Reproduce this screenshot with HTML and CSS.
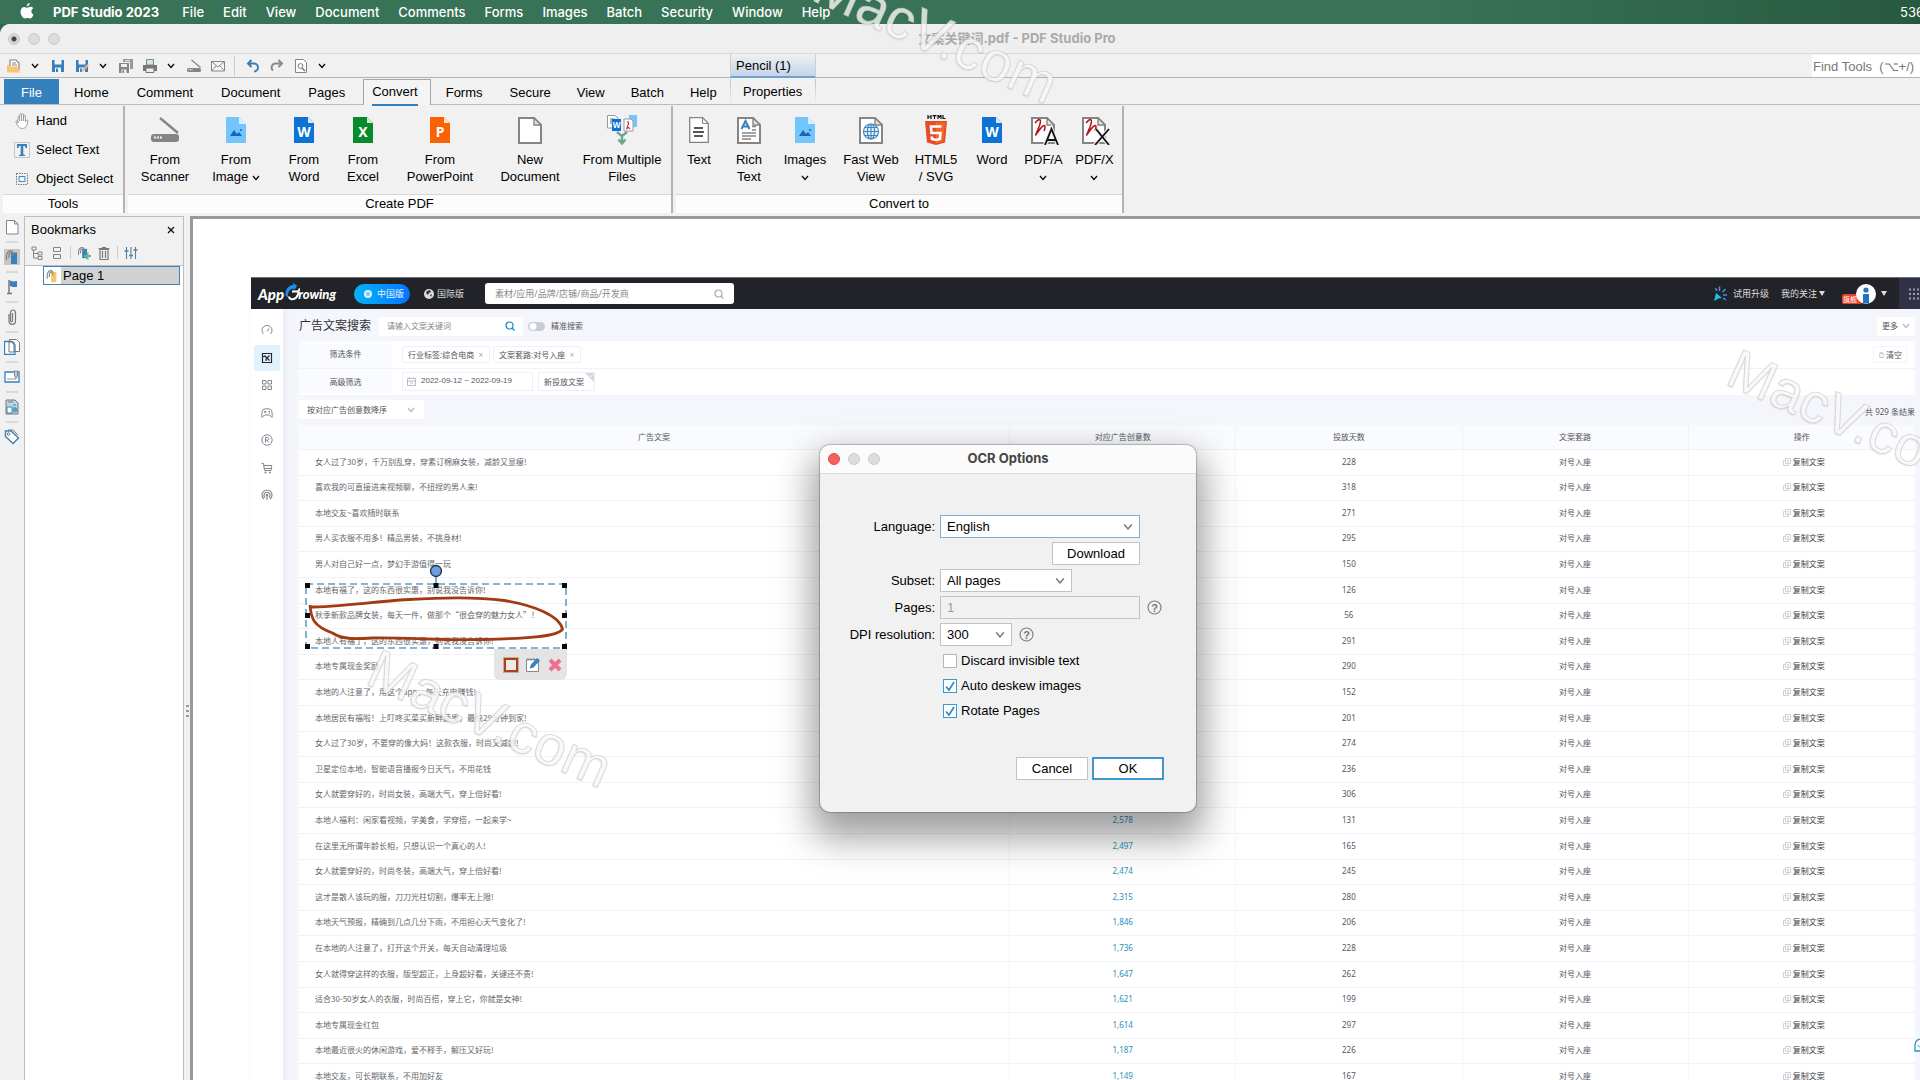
FILE: index.html
```html
<!DOCTYPE html>
<html lang="zh-CN">
<head>
<meta charset="utf-8">
<title>文案关键词.pdf - PDF Studio Pro</title>
<link rel="stylesheet" href="styles.css">
</head>
<body>
<svg class="defs" aria-hidden="true">
  <symbol id="chev" viewBox="0 0 8 6"><path d="M1 1l3 3.500 3-3.500" fill="none" stroke="currentColor" stroke-width="1.200"/></symbol>
  <symbol id="floppy" viewBox="0 0 14 14"><path d="M1 1h12v12H1z" fill="#3b7fb8"/><path d="M3.500 1h7v4.500h-7z" fill="#eef2f6"/><path d="M4 8.500h6V13H4z" fill="#eef2f6"/><path d="M5 9.500h2V13H5z" fill="#3b7fb8"/></symbol>
  <symbol id="scanner" viewBox="0 0 28 26"><path d="M9 1l18 15" stroke="#858585" stroke-width="2.400"/><path d="M3 17h22a3 3 0 0 1 3 3v2a3 3 0 0 1-3 3H3a3 3 0 0 1-3-3v-2a3 3 0 0 1 3-3z" fill="#858585"/><path d="M3 19.500h2v2H3zM6 19.500h2v2H6zM9 19.500h2v2H9z" fill="#f1f1f1"/></symbol>
  <symbol id="picture" viewBox="0 0 20 26"><path d="M0 0h13l7 7v19H0z" fill="#74c5fb"/><path d="M13 0l7 7h-7z" fill="#d9effe"/><path d="M4 19l4-6 3 4 2-2 3 4z" fill="#1467b3"/><circle cx="15" cy="13" r="1" fill="#1467b3"/></symbol>
  <symbol id="word" viewBox="0 0 20 26"><path d="M0 0h14l6 6v20H0z" fill="#0b73d6"/><path d="M14 0l6 6h-6z" fill="#d6e8fa"/><text x="10" y="20" class="glyph">W</text></symbol>
  <symbol id="page" viewBox="0 0 24 27"><path d="M1 1h15l7 7v18H1z" fill="#fff" stroke="#858585" stroke-width="2"/><path d="M16 1v7h7z" fill="#e4e4e4" stroke="#858585" stroke-width="1.400"/></symbol>
  <symbol id="copy" viewBox="0 0 8 8"><path d="M2.500.5h5v5h-5zM5.500 5.500v2h-5v-5h2M4 2.500h2M4 4h2" fill="none" stroke="#c4c5cf" stroke-width=".8"/></symbol>
  <symbol id="lens" viewBox="0 0 10 10"><circle cx="4.500" cy="4.500" r="3.500" fill="none" stroke="currentColor" stroke-width="1.200"/><path d="M7 7l2.500 2.500" stroke="currentColor" stroke-width="1.200"/></symbol>
  <symbol id="help" viewBox="0 0 15 15"><circle cx="7.500" cy="7.500" r="6.500" fill="none" stroke="#808080" stroke-width="1.200"/><text x="7.500" y="11.500" class="qmark">?</text></symbol>
  <symbol id="marker" viewBox="0 0 14 16"><path d="M6 3.500h6v11.500H6z" fill="currentColor"/><path d="M1.500 11V7c0-3 2-5.500 5-5 2 .300 1.500 3 1.500 5M4 9V6.500c0-2 1-3 2.500-3" fill="none" stroke="#858585" stroke-width="1.300"/></symbol>
</svg>

<nav class="menubar">
  <svg class="apple" viewBox="0 0 14 16"><path d="M9.700 0c.1 1.700-1.300 3.300-2.900 3.300C6.600 1.700 8.100.2 9.700 0zM13.500 11.500C12.800 13.400 11.500 15.600 10 15.600c-1 0-1.400-.6-2.600-.6s-1.700.6-2.600.6C3 15.600.500 11.900.5 8.600c0-3 1.900-4.700 3.800-4.700 1.200 0 2.100.8 2.900.8.800 0 1.900-.9 3.400-.9 1.100 0 2 .5 2.600 1.400-2.600 1.500-2.200 5.200.3 6.300z" fill="#fff"/></svg>
  <a href="#" class="app">PDF Studio 2023</a><a href="#">File</a><a href="#">Edit</a><a href="#">View</a><a href="#">Document</a><a href="#">Comments</a><a href="#">Forms</a><a href="#">Images</a><a href="#">Batch</a><a href="#">Security</a><a href="#">Window</a><a href="#">Help</a>
  <span class="status">536</span>
</nav>

<main class="window">
  <header class="titlebar">
    <div class="lights"><i class="dot"></i><i></i><i></i></div>
    <h1>文案关键词.pdf - PDF Studio Pro</h1>
  </header>

  <div class="quick">
    <button class="qi" aria-label="Open"><svg viewBox="0 0 14 14"><path d="M3 8V1h6l3 3v7" fill="#fff" stroke="#858585" stroke-width="1.200"/><path d="M5 4h4M5 6h5" stroke="#858585"/><path d="M0 6h2.500l1 1.500H11l2 6H0z" fill="#fbc66f"/></svg></button>
    <button class="qc" aria-label="More"><svg><use href="#chev"/></svg></button>
    <button class="qi" aria-label="Save"><svg><use href="#floppy"/></svg></button>
    <button class="qi" aria-label="Save as"><svg viewBox="0 0 14 14"><use href="#floppy"/><path d="M6 12l6.500-7 1.500 1.500L7.500 13z" fill="#f2b283"/></svg></button>
    <button class="qc" aria-label="More"><svg><use href="#chev"/></svg></button>
    <button class="qi" aria-label="Save all"><svg viewBox="0 0 14 14"><path d="M4 0h10v10h-3V3H4z" fill="#999"/><path d="M0 4h10v10H0z" fill="#858585"/><path d="M2 5h6v3H2zM2.500 10.500h5V14h-5zM6 1.200h5v1H6z" fill="#efefef"/><path d="M3.500 11h1.500v3H3.500z" fill="#858585"/></svg></button>
    <button class="qi" aria-label="Print"><svg viewBox="0 0 14 14"><path d="M3.500.5h7V6h-7z" fill="#cfe6ee" stroke="#858585"/><path d="M0 6h14v6H0z" fill="#777"/><path d="M3 9h8v4.500H3z" fill="#eee" stroke="#777"/></svg></button>
    <button class="qc" aria-label="More"><svg><use href="#chev"/></svg></button>
    <button class="qi" aria-label="Scan"><svg><use href="#scanner"/></svg></button>
    <button class="qi" aria-label="Email"><svg viewBox="0 0 14 14"><path d="M.5 2.500h13v9.500H.5zM.5 2.500L7 8l6.500-5.500M.5 12l4.500-5M13.500 12L9 7" fill="#f8f8f8" stroke="#858585"/></svg></button>
    <i class="vsep"></i>
    <button class="qi" aria-label="Undo"><svg viewBox="0 0 14 14"><path d="M5.500 1L2 4.500 5.500 8M2.500 4.500H8a4 4 0 0 1 0 8" fill="none" stroke="#3480bd" stroke-width="2"/></svg></button>
    <button class="qi" aria-label="Redo"><svg viewBox="0 0 14 14"><path d="M8.500 1L12 4.500 8.500 8M11.500 4.500H6a4 4 0 0 0-3 7" fill="none" stroke="#8b8b8b" stroke-width="2"/></svg></button>
    <button class="qi" aria-label="Preview"><svg viewBox="0 0 14 14"><path d="M1.500.5h8l3 3v10h-11z" fill="#fff" stroke="#858585"/><circle cx="6.500" cy="7" r="2.400" fill="none" stroke="#777"/><path d="M8 9l3 3" stroke="#777" stroke-width="1.500"/></svg></button>
    <button class="qc" aria-label="More"><svg><use href="#chev"/></svg></button>
    <span class="context">Pencil (1)</span>
    <input class="find" type="text" placeholder="Find Tools&nbsp; (⌥+/)" aria-label="Find Tools">
  </div>

  <nav class="tabs">
    <button class="file">File</button><button>Home</button><button>Comment</button><button>Document</button><button>Pages</button><button class="on"><span>Convert</span></button><button>Forms</button><button class="slim">Secure</button><button class="slim">View</button><button class="slim">Batch</button><button class="slim">Help</button><button class="props">Properties</button>
  </nav>

  <div class="ribbon">
    <section class="group tools">
      <div class="list">
        <button><svg viewBox="0 0 16 16"><path d="M4 10V4.500c0-1.200 1.700-1.200 1.700 0V2c0-1.300 1.900-1.300 1.900 0v-.5c0-1.200 1.900-1.200 1.900 0V3c0-1.200 1.800-1.200 1.800 0v6c1-2.500 3-2 2.500-.500C13 13 11.500 15.500 8.500 15.500S3.500 13 2 9c-.5-1.500 1-2 2 1zM5.700 4.500V8M7.600 2v6M9.500 2v6" fill="#fff" stroke="#999"/></svg>Hand</button>
        <button><svg viewBox="0 0 16 16"><path d="M.5.5h15v15H.5z" fill="none" stroke="#999" stroke-dasharray="1 1"/><path d="M3 2h10v4h-1.500l-.5-2H9.300v8.500l1.700.5v1H5v-1l1.700-.5V4H5l-.5 2H3z" fill="#3a80ba"/></svg>Select Text</button>
        <button><svg viewBox="0 0 16 16"><path d="M2.500 2.500h11v11h-11z" fill="none" stroke="#777" stroke-dasharray="1.500 1"/><path d="M5 5.500h6v5H5z" fill="#eef5fb" stroke="#4585bb"/></svg>Object Select</button>
      </div>
      <h2>Tools</h2>
    </section>
    <section class="group create">
      <div class="items">
        <button><svg class="i28"><use href="#scanner"/></svg><span>From<br>Scanner</span></button>
        <button><svg class="i20"><use href="#picture"/></svg><span>From<br>Image <svg class="ch"><use href="#chev"/></svg></span></button>
        <button><svg class="i20"><use href="#word"/></svg><span>From<br>Word</span></button>
        <button><svg class="i20" viewBox="0 0 20 26"><path d="M0 0h14l6 6v20H0z" fill="#078a2c"/><path d="M14 0l6 6h-6z" fill="#d5ecda"/><text x="10" y="20" class="glyph">X</text></svg><span>From<br>Excel</span></button>
        <button><svg class="i20" viewBox="0 0 20 26"><path d="M0 0h14l6 6v20H0z" fill="#fb6205"/><path d="M14 0l6 6h-6z" fill="#fde0ce"/><text x="10" y="20" class="glyph">P</text></svg><span>From<br>PowerPoint</span></button>
        <button><svg class="i24"><use href="#page"/></svg><span>New<br>Document</span></button>
        <button><svg class="i30" viewBox="0 0 30 30"><path d="M.5.5H8L11 3v10H.500z" fill="#fff" stroke="#999"/><path d="M3 4h5M3 6h5M3 8h3" stroke="#666"/><path d="M22 0h8v12h-8z" fill="#74c5fb"/><path d="M5 4h9v12H5z" fill="#0b73d6"/><text x="9.500" y="13" class="tinyglyph">W</text><path d="M17 4h7l2 2v10h-9z" fill="#fff" stroke="#999"/><path d="M20 7c3-1 1 3 0 6s1-3 3 1" fill="none" stroke="#c33" stroke-width="1.200"/><path d="M10 17l5 4v7M20 17l-5 4M11.500 24.500L15 28.500l3.500-4" fill="none" stroke="#6ba48f" stroke-width="2.400"/></svg><span>From Multiple<br>Files</span></button>
      </div>
      <h2>Create PDF</h2>
    </section>
    <section class="group convert">
      <div class="items">
        <button><svg class="i20" viewBox="0 0 20 26"><path d="M.7.7h13l5.600 5.600v19H.700z" fill="#fff" stroke="#858585" stroke-width="1.300"/><path d="M13.500 1v5.500h5.500" fill="none" stroke="#858585"/><path d="M5 11h9M4 15h11M5 19h9" stroke="#222" stroke-width="1.500"/></svg><span>Text</span></button>
        <button><svg class="i24" viewBox="0 0 24 27"><use href="#page"/><path d="M4.500 12L8.500 4l4 8M6 9.500h5" fill="none" stroke="#3a80ba" stroke-width="2"/><path d="M15 9.500h4M15 13h4M5 16h14M5 19h14M5 22h9" stroke="#858585" stroke-width="1.600"/></svg><span>Rich<br>Text</span></button>
        <button><svg class="i20"><use href="#picture"/></svg><span>Images<br><svg class="ch"><use href="#chev"/></svg></span></button>
        <button><svg class="i24" viewBox="0 0 24 27"><use href="#page"/><g fill="#e8f2fa" stroke="#3f86bd" stroke-width="1.200"><circle cx="12" cy="14.500" r="7.500"/><ellipse cx="12" cy="14.500" rx="3.600" ry="7.500"/><path d="M12 7v15M4.500 14.500h15M6 10.500h12M6 18.500h12"/></g></svg><span>Fast Web<br>View</span></button>
        <button><svg class="i30" viewBox="0 0 30 30"><path d="M7 0v4M10 0v4M7 2h3M11.500.6h4M13.500 0v4M17 4V0l1.500 2L20 0v4M22 0v3.500h2.500" fill="none" stroke="#111" stroke-width="1.200"/><path d="M4 6h22l-2 21.500-9 2.500-9-2.500z" fill="#e44d26"/><path d="M15 7.500h9l-1.700 19L15 28.500z" fill="#f1662a"/><path d="M20.500 11.500H10l.5 6.500h9l-.6 6-3.900 1-4-1-.2-2.500" fill="none" stroke="#fff" stroke-width="2.600"/></svg><span>HTML5<br>/ SVG</span></button>
        <button><svg class="i20"><use href="#word"/></svg><span>Word</span></button>
        <button><svg class="i30" viewBox="0 0 30 30"><use href="#page" x="2" y="2" width="24" height="27"/><path d="M6 8c5-6 7-4 4 4l-3 7c-2 4 4-6 7-8s2 3 1 5" fill="none" stroke="#b8161c" stroke-width="1.600"/><path d="M16 30L22.500 14 29 30M18 25h9" fill="none" stroke="#f1f1f1" stroke-width="4"/><path d="M16 30L22.500 14 29 30M18 25h9" fill="none" stroke="#111" stroke-width="1.800"/></svg><span>PDF/A<br><svg class="ch"><use href="#chev"/></svg></span></button>
        <button><svg class="i30" viewBox="0 0 30 30"><use href="#page" x="2" y="2" width="24" height="27"/><path d="M6 8c5-6 7-4 4 4l-3 7c-2 4 4-6 7-8s2 3 1 5" fill="none" stroke="#b8161c" stroke-width="1.600"/><path d="M16 14l13 16M29 14L15 30" fill="none" stroke="#f1f1f1" stroke-width="4"/><path d="M16 14l13 16M29 14L15 30" fill="none" stroke="#111" stroke-width="1.800"/></svg><span>PDF/X<br><svg class="ch"><use href="#chev"/></svg></span></button>
      </div>
      <h2>Convert to</h2>
    </section>
  </div>

  <div class="work">
    <aside class="rail">
      <button aria-label="Pages"><svg viewBox="0 0 16 16"><path d="M2.500 1.500h8l3.500 3.500v10H2.500zM10.500 1.500V5H14" fill="#fff" stroke="#858585"/></svg></button>
      <button aria-label="Bookmarks" class="sel"><svg class="blue"><use href="#marker"/></svg></button>
      <button aria-label="Destinations"><svg viewBox="0 0 16 16"><path d="M5 1v13M3 14.500h5" stroke="#777" stroke-width="1.500"/><path d="M6 1.500l3 1 4-.5v6H9L6 7z" fill="#3a80ba"/></svg></button>
      <button aria-label="Attachments"><svg viewBox="0 0 16 16"><path d="M8.500 4v7.500c0 1.500-2 1.500-2 0V4c0-4 5-4 5 0v8c0 4.500-6.500 4.500-6.500 0V5" fill="none" stroke="#777" stroke-width="1.200"/></svg></button>
      <button aria-label="Layers"><svg viewBox="0 0 16 16"><path d="M5.500.5h7l3 3v9h-10z" fill="#fff" stroke="#777"/><path d="M.5 2.500h7L11 6v9.500H.5z" fill="#fff" stroke="#3a80ba" stroke-width="1.300"/><path d="M5 6V3h5v10H5z" fill="none" stroke="#777"/></svg></button>
      <button aria-label="Signatures"><svg viewBox="0 0 16 16"><path d="M1 3h14v10H1z" fill="#fff" stroke="#3a80ba" stroke-width="1.300"/><path d="M3 10h9" stroke="#999"/><path d="M10.500 2v5l1.500 2.500L13.500 7V2z" fill="#ccc" stroke="#888"/></svg></button>
      <button aria-label="Fields"><svg viewBox="0 0 16 16"><path d="M2 1h9l3 3v11H2z" fill="#bcd8e3" stroke="#777"/><path d="M3 8h5v6H3z" fill="#fff" stroke="#3a80ba"/><path d="M4 3h5M9 6h3M9 9h3" stroke="#777"/><circle cx="11" cy="11" r="2.500" fill="#4ba3c4"/></svg></button>
      <button aria-label="Tags"><svg viewBox="0 0 16 16"><path d="M1.500 2H7l7.500 7L9 14.500 1.500 7.500z" fill="#fff" stroke="#3a80ba" stroke-width="1.400"/><path d="M4 1h5l5 5" fill="none" stroke="#777"/><circle cx="4.500" cy="5" r="1.300" fill="none" stroke="#777"/></svg></button>
    </aside>
    <aside class="panel">
      <header><h2>Bookmarks</h2><button aria-label="Close"><svg viewBox="0 0 8 8"><path d="M1 1l6 6M7 1L1 7" stroke="#111" stroke-width="1.300"/></svg></button></header>
      <div class="ptools">
        <svg viewBox="0 0 14 14"><path d="M2 1h4v3H2zM8 6h4v3H8zM8 10.500h4v3H8zM3.500 4v8H8M3.500 7.500H8" fill="none" stroke="#858585"/></svg>
        <svg viewBox="0 0 14 14"><path d="M3.500 1.500h7v4h-7zM3.500 8.500h7v4h-7z" fill="none" stroke="#858585"/></svg>
        <i></i>
        <svg class="blue" viewBox="0 0 14 14"><use href="#marker" width="12" height="13"/><path d="M10.500 6.500v7M7 10h7" stroke="#6fb487" stroke-width="2"/></svg>
        <svg viewBox="0 0 14 14"><path d="M3 3.500h8v10H3zM1.500 2.500h11M5 1.500h4M5.500 5v7M8.500 5v7" fill="none" stroke="#777" stroke-width="1.200"/></svg>
        <i></i>
        <svg viewBox="0 0 14 14"><path d="M2.500 1v12M7 1v12M11.500 1v12" stroke="#4585ad" stroke-width="1.100"/><path d="M.5 5h4M5 9.500h4M9.500 4h4" stroke="#777" stroke-width="1.600"/></svg>
      </div>
      <ul class="tree"><li><svg class="amber"><use href="#marker"/></svg><span>Page 1</span></li></ul>
    </aside>
    <div class="gutter"><i></i></div>

    <div class="viewer">
      <article class="page">
        <header class="topnav">
          <span class="logo"><b class="big">App</b><svg viewBox="0 0 16 20"><path d="M9.500 3C4 3 1 8 1.500 14l2.500 1.500C3.500 10 6 6.500 9.500 6.500V9l3.500-5L9 .500z" fill="#1b8fef"/><path d="M8 9.500h6.500c0 5-3.500 8.500-7.500 7.500-1.500-.5-2-1.500-2-2.500M14 9.500c1-1 1.500-2 2-3" fill="none" stroke="#fff" stroke-width="2"/></svg><b>rowing</b></span>
          <a href="#" class="pill"><i></i>中国版</a>
          <a href="#" class="intl"><svg viewBox="0 0 10 10"><circle cx="5" cy="5" r="5" fill="#ddd"/><path d="M3 2l3-1 1 2-2 1-1 2-2-2zM6 6l2-1-1 3z" fill="#33343c"/></svg>国际版</a>
          <label class="gsearch"><input type="text" placeholder="素材/应用/品牌/店铺/商品/开发商" aria-label="搜索"><svg><use href="#lens"/></svg></label>
          <div class="user">
            <svg class="spark" viewBox="0 0 14 16"><path d="M1 15l2-8 6 5-3.500.5z" fill="#18c3f0"/><path d="M6.500 5V.5M9.500 6l3-3M10 9h4M10 12l3 2M4 5L2.500 2" stroke="#3f8ff0" stroke-width="1.500"/></svg>
            <a href="#">试用升级</a><a href="#" class="fav">我的关注<i class="tri"></i></a>
            <span class="avatar"><b>旗舰</b><svg viewBox="0 0 20 20"><circle cx="10" cy="10" r="10" fill="#fff"/><circle cx="10" cy="6" r="2.600" fill="#2377b8"/><path d="M7 10h6v9.500H7z" fill="#2377b8"/></svg></span><i class="tri"></i>
          </div>
          <button class="apps" aria-label="应用"><svg viewBox="0 0 12 12"><path d="M0 1.500h12M0 6h12M0 10.500h12" stroke="#9c9cab" stroke-width="2" stroke-dasharray="2 2"/></svg></button>
        </header>
        <div class="body">
          <nav class="side">
            <a href="#" aria-label="概览"><svg viewBox="0 0 12 12"><path d="M2.500 10A5 5 0 1 1 9.500 10M6 7.500L8 4.500" fill="none" stroke="#858692"/></svg></a>
            <a href="#" class="cur" aria-label="素材"><svg viewBox="0 0 12 12"><path d="M1.500 1.500h9v9h-9zM3.500 3.500l5 5M8.500 3.500L5 7v2M1.500 4.500h3" fill="none" stroke="#23242e" stroke-width="1.200"/></svg></a>
            <a href="#" aria-label="应用"><svg viewBox="0 0 12 12"><path d="M1.500 1.500h3.500V5H1.500zM7 1.500h3.500V5H7zM1.500 7h3.500v3.500H1.500zM7 7h3.500v3.500H7z" fill="none" stroke="#858692"/></svg></a>
            <a href="#" aria-label="游戏"><svg viewBox="0 0 12 12"><path d="M2 2.500c2-1 6-1 8 0 1 1 1.500 5 1 8L8.500 8h-5L1 10.500C.5 7.500 1 3.500 2 2.500zM3 5h2.500M4.200 4v2M7.500 4.500h1.500M7.500 6H9" fill="none" stroke="#858692"/></svg></a>
            <a href="#" aria-label="品牌"><svg viewBox="0 0 12 12"><circle cx="6" cy="6" r="5.200" fill="none" stroke="#858692"/><path d="M4.500 8.500v-5h2c2 0 2 2.500 0 2.500h-2M6 6l1.500 2.500" fill="none" stroke="#858692"/></svg></a>
            <a href="#" aria-label="商品"><svg viewBox="0 0 12 12"><path d="M.5 1.500h2l1 7h6.500l.8-5H3M3.500 6.500H10" fill="none" stroke="#858692"/><circle cx="4.500" cy="10.500" r="1" fill="#858692"/><circle cx="9" cy="10.500" r="1" fill="#858692"/></svg></a>
            <a href="#" aria-label="直播"><svg viewBox="0 0 12 12"><path d="M3 10a5 5 0 1 1 6 0M4 8.500a3 3 0 1 1 4 0M6 6v5" fill="none" stroke="#858692" stroke-width="1.200"/><circle cx="6" cy="6" r="1.300" fill="#858692"/></svg></a>
          </nav>
          <div class="content">
            <div class="head">
              <h2>广告文案搜索</h2>
              <label class="kw"><input type="text" placeholder="请输入文案关键词" aria-label="文案关键词"><svg><use href="#lens"/></svg></label>
              <label class="switch"><input type="checkbox">精准搜索</label>
              <button class="more">更多<svg><use href="#chev"/></svg></button>
            </div>
            <div class="filters">
              <div class="frow"><span class="fname">筛选条件</span><span class="tag">行业标签:综合电商<i>×</i></span><span class="tag">文案套路:对号入座<i>×</i></span><button class="clear"><svg viewBox="0 0 6 8"><path d="M.5 2h5M1 2v5h4V2M2 1h2" fill="none" stroke="#aaa" stroke-width=".8"/></svg>清空</button></div>
              <div class="frow"><span class="fname">高级筛选</span><button class="date"><svg viewBox="0 0 9 9"><path d="M.5 1.500h8v7h-8zM.5 4h8M2.500 0v2M6.500 0v2M3 6h3" fill="none" stroke="#b9bcc8"/></svg>2022-09-12 ~ 2022-09-19</button><button class="fresh">新投放文案<svg viewBox="0 0 9 9"><path d="M0 0h9v9z" fill="#d3d5e1"/><path d="M4 2.500L5.500 4 8 1.500" fill="none" stroke="#fff"/></svg></button></div>
            </div>
            <div class="sortline"><button class="sort">按对应广告创意数降序<svg><use href="#chev"/></svg></button><span>共 929 条结果</span></div>
            <table>
              <thead><tr><th class="c1">广告文案</th><th>对应广告创意数</th><th>投放天数</th><th>文案套路</th><th>操作</th></tr></thead>
              <tbody>
<tr><td>女人过了30岁，千万别乱穿，穿素订棉麻女装，减龄又显瘦!</td><td></td><td>228</td><td>对号入座</td><td><button><svg><use href="#copy"/></svg>复制文案</button></td></tr>
<tr><td>喜欢我的可直接进来视频聊，不扭捏的男人来!</td><td></td><td>318</td><td>对号入座</td><td><button><svg><use href="#copy"/></svg>复制文案</button></td></tr>
<tr><td>本地交友~喜欢随时联系</td><td></td><td>271</td><td>对号入座</td><td><button><svg><use href="#copy"/></svg>复制文案</button></td></tr>
<tr><td>男人买衣服不用多！精品男装，不挑身材!</td><td></td><td>295</td><td>对号入座</td><td><button><svg><use href="#copy"/></svg>复制文案</button></td></tr>
<tr><td>男人对自己好一点，梦幻手游值得一玩</td><td></td><td>150</td><td>对号入座</td><td><button><svg><use href="#copy"/></svg>复制文案</button></td></tr>
<tr><td>本地有福了，这的东西很实惠，别说我没告诉你!</td><td></td><td>126</td><td>对号入座</td><td><button><svg><use href="#copy"/></svg>复制文案</button></td></tr>
<tr><td>秋季新款品牌女装，每天一件，做那个“很会穿的魅力女人”！</td><td></td><td>56</td><td>对号入座</td><td><button><svg><use href="#copy"/></svg>复制文案</button></td></tr>
<tr><td>本地人有福了，这的东西很实惠，别说我没告诉你!</td><td></td><td>291</td><td>对号入座</td><td><button><svg><use href="#copy"/></svg>复制文案</button></td></tr>
<tr><td>本地专属现金奖励</td><td></td><td>290</td><td>对号入座</td><td><button><svg><use href="#copy"/></svg>复制文案</button></td></tr>
<tr><td>本地的人注意了，用这个app，每天充电赚钱!</td><td></td><td>152</td><td>对号入座</td><td><button><svg><use href="#copy"/></svg>复制文案</button></td></tr>
<tr><td>本地居民有福啦！上叮咚买菜买新鲜蔬果，最快29分钟到家!</td><td></td><td>201</td><td>对号入座</td><td><button><svg><use href="#copy"/></svg>复制文案</button></td></tr>
<tr><td>女人过了30岁，不要穿的像大妈！这款衣服，时尚又减龄!</td><td></td><td>274</td><td>对号入座</td><td><button><svg><use href="#copy"/></svg>复制文案</button></td></tr>
<tr><td>卫星定位本地，智能语音播报今日天气，不用花钱</td><td></td><td>236</td><td>对号入座</td><td><button><svg><use href="#copy"/></svg>复制文案</button></td></tr>
<tr><td>女人就要穿好的，时尚女装，高端大气，穿上倍好看!</td><td></td><td>306</td><td>对号入座</td><td><button><svg><use href="#copy"/></svg>复制文案</button></td></tr>
<tr><td>本地人福利：闲家看视频，学美食，学穿搭，一起来学~</td><td>2,578</td><td>131</td><td>对号入座</td><td><button><svg><use href="#copy"/></svg>复制文案</button></td></tr>
<tr><td>在这里无所谓年龄长相，只想认识一个真心的人!</td><td>2,497</td><td>165</td><td>对号入座</td><td><button><svg><use href="#copy"/></svg>复制文案</button></td></tr>
<tr><td>女人就要穿好的，时尚冬装，高端大气，穿上倍好看!</td><td>2,474</td><td>245</td><td>对号入座</td><td><button><svg><use href="#copy"/></svg>复制文案</button></td></tr>
<tr><td>这才是散人该玩的服，刀刀光柱切割，爆率无上限!</td><td>2,315</td><td>280</td><td>对号入座</td><td><button><svg><use href="#copy"/></svg>复制文案</button></td></tr>
<tr><td>本地天气预报，精确到几点几分下雨，不用担心天气变化了!</td><td>1,846</td><td>206</td><td>对号入座</td><td><button><svg><use href="#copy"/></svg>复制文案</button></td></tr>
<tr><td>在本地的人注意了，打开这个开关，每天自动清理垃圾</td><td>1,736</td><td>228</td><td>对号入座</td><td><button><svg><use href="#copy"/></svg>复制文案</button></td></tr>
<tr><td>女人就得穿这样的衣服，版型超正，上身超好看，关键还不贵!</td><td>1,647</td><td>262</td><td>对号入座</td><td><button><svg><use href="#copy"/></svg>复制文案</button></td></tr>
<tr><td>适合30-50岁女人的衣服，时尚百搭，穿上它，你就是女神!</td><td>1,621</td><td>199</td><td>对号入座</td><td><button><svg><use href="#copy"/></svg>复制文案</button></td></tr>
<tr><td>本地专属现金红包</td><td>1,614</td><td>297</td><td>对号入座</td><td><button><svg><use href="#copy"/></svg>复制文案</button></td></tr>
<tr><td>本地最近很火的休闲游戏，爱不释手，解压又好玩!</td><td>1,187</td><td>226</td><td>对号入座</td><td><button><svg><use href="#copy"/></svg>复制文案</button></td></tr>
<tr><td>本地交友，可长期联系，不用加好友</td><td>1,149</td><td>167</td><td>对号入座</td><td><button><svg><use href="#copy"/></svg>复制文案</button></td></tr>
              </tbody>
            </table>
          </div>
        </div>
        <svg class="chat" viewBox="0 0 14 14"><path d="M1 13V7a6 6 0 1 1 6 6z" fill="#fff" stroke="#2b8fc7" stroke-width="1.300"/><path d="M4 7c1 3 5 3 6 0" fill="none" stroke="#2b8fc7"/></svg>
      </article>

      <div class="annot">
        <svg class="scribble" viewBox="0 0 262 85">
          <path d="M131 10v14" stroke="#4f94c6" stroke-width="1.500"/>
          <path d="M1 20h260v64H1z" fill="none" stroke="#5f9fca" stroke-width="1.600" stroke-dasharray="7 4"/>
          <path d="M4 43c30 0 60-5 100-7.500s70-2.500 95 1c30 5 55 15 58.500 28.500-4 8-40 9.500-78 10.500-40 1-75-2-112-1.500-15 1-30 2-40-5C8 62 6 54 5 41" fill="none" stroke="#a23b12" stroke-width="2.800"/>
          <path d="M0 19h5v5H0zM128.500 19h5v5h-5zM257 19h5v5h-5zM0 49h5v5H0zM257 49h5v5h-5zM0 80h5v5H0zM128.500 80h5v5h-5zM257 80h5v5h-5z" fill="#0b0b0b"/>
          <circle cx="131" cy="7" r="5.500" fill="#6c9edb" stroke="#1c2f4a" stroke-width="1.300"/>
        </svg>
        <div class="mini">
          <button aria-label="Colour"><i class="swatch"></i></button>
          <button aria-label="Edit"><svg viewBox="0 0 16 16"><path d="M1.500 2.500h12v12h-12z" fill="#fff" stroke="#888"/><path d="M3 1v3M6 1v3M9 1v3" stroke="#888"/><path d="M4.500 11.500L6 7.500l6-6.500 3 2.500-6.500 7z" fill="#3a80ba"/></svg></button>
          <button aria-label="Delete"><svg viewBox="0 0 16 16"><path d="M3 3l10 10M13 3L3 13" stroke="#ed6f8d" stroke-width="4"/></svg></button>
        </div>
      </div>
    </div>
  </div>
</main>

<form class="dialog" role="dialog" aria-labelledby="dlg">
  <header><div class="lights"><i class="red"></i><i></i><i></i></div><h2 id="dlg">OCR Options</h2></header>
  <div class="fields">
    <label for="lang">Language:</label>
    <span class="pick w200 focus"><select id="lang"><option>English</option></select><svg><use href="#chev"/></svg></span>
    <button type="button" class="dl">Download</button>
    <label for="subset">Subset:</label>
    <span class="pick w132"><select id="subset"><option>All pages</option></select><svg><use href="#chev"/></svg></span>
    <label for="pages">Pages:</label>
    <span class="row"><input id="pages" type="text" value="1" disabled><svg class="q"><use href="#help"/></svg></span>
    <label for="dpi">DPI resolution:</label>
    <span class="row"><span class="pick w72"><select id="dpi"><option>300</option></select><svg><use href="#chev"/></svg></span><svg class="q"><use href="#help"/></svg></span>
  </div>
  <div class="checks">
    <label><span class="box"><input type="checkbox"></span>Discard invisible text</label>
    <label><span class="box"><input type="checkbox" checked><svg viewBox="0 0 14 14"><path d="M3 7.500L6 11l5-8" fill="none" stroke="#2e8bc9" stroke-width="1.700"/></svg></span>Auto deskew images</label>
    <label><span class="box"><input type="checkbox" checked><svg viewBox="0 0 14 14"><path d="M3 7.500L6 11l5-8" fill="none" stroke="#2e8bc9" stroke-width="1.700"/></svg></span>Rotate Pages</label>
  </div>
  <footer><button type="button">Cancel</button><button type="button" class="ok">OK</button></footer>
</form>

<div class="marks" aria-hidden="true"><span class="m1">MacV.com</span><span class="m2">MacV.com</span><span class="m3">MacV.com</span></div>
</body>
</html>
```
FILE: styles.css
```css
* { box-sizing: border-box; }
html, body { height: 100%; }
body {
  margin: 0;
  display: flex;
  flex-direction: column;
  position: relative;
  overflow: hidden;
  background: #2f684b;
  color: #000;
  font: 13px/17px "Liberation Sans", "Noto Sans CJK SC", sans-serif;
}
button { border: 0; margin: 0; padding: 0; background: none; color: inherit; font: inherit; }
input, select { font: inherit; color: inherit; margin: 0; }
h1, h2, ul { margin: 0; padding: 0; font-size: 13px; font-weight: 400; }
a { color: inherit; text-decoration: none; }
svg { display: block; flex: none; }
i { display: block; flex: none; font-style: normal; }
.defs { display: none; }
.glyph { font: bold 14px "Noto Sans", sans-serif; fill: #fff; text-anchor: middle; }
.tinyglyph { font: bold 8px "Noto Sans", sans-serif; fill: #fff; text-anchor: middle; }
.qmark { font: bold 11px "Liberation Sans", sans-serif; fill: #777; text-anchor: middle; }
.blue { color: #3a80ba; }
.amber { color: #f7c46c; }

/* System menu bar */
.menubar {
  flex: none;
  display: flex;
  align-items: center;
  gap: 19px;
  height: 24px;
  padding-left: 20px;
  color: #fff;
  font: 500 13px/24px Inter, sans-serif;
  background: linear-gradient(90deg, #387357 0%, #387357 75%, #27593f 100%);
}
.apple { width: 14px; height: 16px; margin-bottom: 2px; }
.app { font-weight: 700; margin-right: 4px; }
.status { margin-left: auto; margin-right: -4px; font-weight: 400; }

/* Application window */
.window { flex: 1; min-height: 0; display: flex; flex-direction: column; background: #f1f1f1; border-top-left-radius: 10px; }
.titlebar { flex: none; display: grid; grid-template-columns: 1fr auto 1fr; align-items: center; height: 30px; padding-left: 8px; background: #efefef; border-bottom: 1px solid #d8d8d8; border-top-left-radius: 10px; }
.titlebar h1 { grid-column: 2; font: 700 13px/18px Inter, "Noto Sans CJK SC", sans-serif; color: #aaa; margin-left: 106px; padding-bottom: 1px; }
.lights { display: flex; gap: 8px; }
.lights i { width: 12px; height: 12px; border-radius: 50%; background: #dcdcdc; border: 1px solid #cbcbcb; }
.lights .dot { background: radial-gradient(circle, #444 0 2px, #d6d6d6 3px); }
.lights .red { background: #f4605a; border-color: #e3504b; }

.quick { flex: none; display: flex; align-items: center; height: 24px; padding-left: 7px; border-bottom: 1px solid #b3b3b3; }
.qi { width: 14px; margin-right: 10px; }
.qc { width: 8px; margin-right: 12px; }
.qi svg { width: 14px; height: 14px; }
.qc svg { width: 8px; height: 6px; }
.vsep { width: 1px; height: 20px; background: #ccc; margin: 0 11px 0 -1px; }
.context { align-self: stretch; width: 86px; margin: 0 0 -1px 392px; padding-left: 5px; line-height: 23px; background: linear-gradient(#f1f1f1, #c3d4e8); border: solid #c9d0d8; border-width: 0 1px; border-bottom: 2px solid #6fa2d2; }
.find { align-self: stretch; width: 108px; margin-left: auto; padding: 0 0 0 1px; border: 0; background: #fff; border-top: 1px solid #f1f1f1; }
.find::placeholder { color: #777; opacity: 1; }

.tabs { flex: none; display: flex; align-items: stretch; height: 27px; padding: 1px 0 0 4px; border-bottom: 1px solid #bbb; }
.tabs button { padding: 1px 14px 0; line-height: 25px; }
.tabs .file { width: 55px; margin-right: 1px; background: #3581bd; color: #fff; }
.tabs .on { padding: 0 12px 0 8px; margin: 0 1px -1px 4px; background: #f4f4f4; border: 1px solid #a5a5a5; border-bottom: 0; line-height: 24px; }
.tabs .on span { display: block; border-bottom: 2px solid #3581bd; }
.tabs .slim { padding: 1px 13px 0; }
.tabs .props { width: 86px; padding: 0; border: solid; border-width: 0 1px; border-image: linear-gradient(#b9bec4, #f1f1f1) 1; }

/* Ribbon */
.ribbon { flex: none; display: flex; align-items: stretch; padding: 1px 0 3px; }
.group { display: flex; flex-direction: column; border-right: 2px solid #b3b3b3; }
.group h2 { margin-left: 3px; height: 19px; line-height: 17px; text-align: center; background: #fcfcfc; border-top: 1px solid #d6d6d6; }
.list { display: flex; flex-direction: column; width: 123px; height: 88px; padding: 0 0 0 14px; }
.list button { display: flex; align-items: center; gap: 6px; height: 29px; }
.list svg { width: 16px; height: 16px; }
.items { display: grid; height: 88px; padding: 9px 0 0 8px; }
.create .items { grid-template-columns: 64px 78px 58px 60px 94px 86px 98px; }
.convert .items { padding-left: 3px; grid-template-columns: 46px 54px 58px 74px 56px 56px 47px 55px; }
.items button { display: grid; grid-template-rows: 30px 34px; row-gap: 6px; align-items: center; justify-items: center; align-content: start; }
.items span { align-self: start; white-space: nowrap; }
.ch { display: inline-block; width: 8px; height: 6px; }
.i20 { width: 20px; height: 26px; }
.i24 { width: 24px; height: 27px; }
.i28 { width: 28px; height: 26px; }
.i30 { width: 30px; height: 30px; }

/* Work area */
.work { flex: 1; min-height: 0; display: flex; }
.rail { flex: none; width: 24px; display: flex; flex-direction: column; align-items: center; padding-top: 3px; }
.rail button { position: relative; display: grid; place-items: center; width: 16px; height: 16px; margin-bottom: 14px; }
.rail button:not(:last-child)::after { content: ""; position: absolute; top: 22px; left: 2px; width: 12px; height: 2px; background: #d9d9d9; }
.rail .sel { background: #c6c6c6; }
.rail svg { width: 16px; height: 16px; }
.panel { flex: none; width: 160px; background: #fff; border: 1px solid #bdbdbd; border-bottom: 0; }
.panel header { display: flex; justify-content: space-between; align-items: center; height: 25px; padding: 0 8px 0 6px; background: #f1f1f1; }
.panel header svg { width: 8px; height: 8px; }
.ptools { display: flex; align-items: center; height: 24px; padding: 0 0 2px 5px; gap: 6px; background: #f1f1f1; border-bottom: 1px solid #bdbdbd; }
.ptools svg { width: 14px; height: 14px; }
.ptools i { width: 1px; height: 13px; background: #ccc; }
.tree { list-style: none; padding: 0 3px 0 18px; }
.tree li { display: flex; align-items: center; border: 1px solid #4380b5; }
.tree svg { width: 14px; height: 14px; margin: 0 2px 0 1px; }
.tree span { flex: 1; padding-left: 2px; background: #d1d1d1; }
.gutter { flex: none; width: 6px; display: grid; place-items: center; }
.gutter i { width: 3px; height: 12px; background: repeating-linear-gradient(#999 0 2px, transparent 2px 5px); margin-top: 126px; }
.viewer { flex: 1; min-width: 0; position: relative; overflow: hidden; background: #fff; border: 3px solid #999; border-width: 3px 0 0 3px; padding: 58px 0 0 58px; }

/* Web page inside the document */
.page { position: relative; font: 8px/12px "Noto Sans", "Noto Sans CJK SC", sans-serif; color: #55565e; background: #f5f6fb; }
.topnav { display: flex; align-items: center; height: 32px; padding-left: 7px; background: #222328; border-top: 1px solid #6f7078; color: #ddd; font-size: 9px; }
.logo { display: flex; align-items: center; width: 78px; margin-right: 18px; color: #fff; font: italic 700 13px/20px Lato, sans-serif; }
.logo b { margin-left: -2px; }
.logo .big { margin: 0; font-size: 15px; }
.logo svg { width: 16px; height: 20px; margin-top: -4px; }
.pill { display: flex; align-items: center; gap: 5px; width: 56px; height: 20px; padding-left: 10px; border-radius: 10px; background: linear-gradient(90deg, #03b5f7, #0773ff); color: #e8f4ff; white-space: nowrap; }
.pill i { width: 8px; height: 8px; border: 2px solid #dff2ff; border-radius: 50%; background: #7cc9f8; }
.intl { display: flex; align-items: center; gap: 3px; margin: 0 21px 0 14px; white-space: nowrap; }
.intl svg { width: 10px; height: 10px; }
.gsearch { display: flex; align-items: center; width: 249px; height: 21px; padding: 0 10px; background: #fff; border-radius: 3px; color: #aaa; }
.gsearch input, .kw input { flex: 1; min-width: 0; padding: 0; border: 0; background: none; }
.gsearch input::placeholder, .kw input::placeholder { color: #888; opacity: 1; }
.gsearch svg, .kw svg { width: 10px; height: 10px; }
.user { display: flex; align-items: center; margin-left: auto; margin-right: 12px; white-space: nowrap; }
.spark { width: 14px; height: 16px; margin-right: 6px; }
.fav { display: flex; align-items: center; gap: 2px; margin: 0 17px 0 12px; }
.tri { border: 3px solid transparent; border-top: 5px solid #ddd; border-bottom: 0; }
.avatar { display: flex; margin-right: 5px; }
.avatar b { align-self: flex-end; width: 20px; height: 10px; margin-right: -6px; padding-left: 1px; border-radius: 2px; background: #e8401f; color: #fff; font: 7px/10px "Noto Sans CJK SC", sans-serif; }
.avatar svg { width: 20px; height: 20px; }
.apps { align-self: stretch; width: 21px; padding-left: 10px; background: #303046; overflow: hidden; }
.apps svg { width: 12px; height: 12px; }
.body { display: flex; }
.side { flex: none; width: 32px; display: flex; flex-direction: column; align-items: center; padding-top: 8px; background: #fff; box-shadow: 2px 0 6px rgba(60, 70, 110, .08); }
.side a { display: grid; place-items: center; width: 26px; height: 26px; margin-bottom: 1px; border-radius: 2px; }
.side a:nth-child(2n+1) { margin-bottom: 2px; }
.side .cur { background: #e1f2fc; }
.side svg { width: 12px; height: 12px; }
.content { flex: 1; min-width: 0; padding: 8px 5px 0 16px; }
.head { display: flex; align-items: center; height: 18px; margin-bottom: 6px; }
.head h2 { font-size: 12px; line-height: 18px; color: #2e3038; margin-right: 8px; }
.kw { display: flex; align-items: center; width: 144px; height: 19px; padding: 0 8px; background: #fff; color: #1687d3; }
.kw input { color: #555; }
.switch { display: flex; align-items: center; gap: 6px; margin-left: 5px; }
.switch input { appearance: none; width: 17px; height: 9px; border-radius: 5px; background: radial-gradient(circle at 5px 50%, #fff 0 3px, #c9cbd8 4px); }
.more { display: flex; align-items: center; justify-content: space-between; width: 38px; height: 19px; margin-left: auto; padding: 0 5px; background: #fff; }
.more svg, .sort svg { width: 8px; height: 6px; color: #b5b7c2; }
.filters { background: #fff; }
.frow { display: flex; align-items: center; height: 27px; padding-right: 8px; }
.frow + .frow { border-top: 1px solid #f1f2f7; padding-bottom: 2px; }
.fname { align-self: stretch; width: 93px; margin-right: 10px; line-height: 26px; text-align: center; background: #fafbff; }
.tag { display: flex; align-items: center; justify-content: space-between; width: 88px; height: 17px; padding: 0 6px 0 5px; margin-right: 3px; border: 1px solid #eef0f6; border-radius: 2px; white-space: nowrap; }
.tag i { color: #aaa; }
.clear { display: flex; align-items: center; gap: 2px; width: 34px; height: 17px; margin-left: auto; padding-left: 5px; border: 1px solid #f4f5f9; }
.clear svg { width: 5px; height: 8px; }
.date { display: flex; align-items: center; gap: 5px; width: 131px; height: 19px; padding-left: 4px; border: 1px solid #eef0f6; font-family: "Liberation Sans", sans-serif; }
.date svg { width: 9px; height: 9px; }
.fresh { display: flex; justify-content: space-between; width: 57px; height: 19px; margin-left: 5px; padding-left: 5px; border: 1px solid #eef0f6; line-height: 17px; }
.fresh svg { width: 9px; height: 9px; }
.sortline { display: flex; justify-content: space-between; align-items: center; height: 19px; margin: 5px 0 6px; }
.sortline span { padding-top: 4px; }
.sort { display: flex; align-items: center; justify-content: space-between; width: 125px; height: 19px; padding: 0 9px 0 8px; background: #fff; }
table { width: 100%; table-layout: fixed; border-collapse: separate; border-spacing: 0; background: #fff; }
th { height: 25px; padding: 0; width: 14%; font-weight: 400; background: #fafbff; border-right: 1px solid #f1f2f7; border-bottom: 1px solid #f1f2f7; }
th.c1 { width: 44%; }
td { height: 26px; padding: 0 0 2px; text-align: center; border-bottom: 1px solid #f1f2f7; border-right: 1px solid #f4f5f9; }
tr:nth-child(5n+2) td, tr:nth-child(5n+4) td { height: 25px; }
td:first-child { padding-left: 16px; text-align: left; color: #66676e; font-family: "Noto Sans CJK SC", sans-serif; }
td:nth-child(2) { color: #2a90bd; }
td:last-child, th:last-child { border-right: 0; }
td button { display: flex; align-items: center; gap: 2px; margin: 0 auto; padding-left: 4px; color: #3c3d45; }
td button svg { width: 8px; height: 8px; }
.chat { position: absolute; right: -8px; top: 761px; width: 14px; height: 14px; }

/* Selected pencil annotation */
.annot { position: absolute; left: 112px; top: 345px; width: 262px; }
.scribble { width: 262px; height: 85px; }
.mini { display: flex; align-items: center; gap: 4px; width: 73px; height: 31px; margin: 0 0 0 auto; padding-left: 9px; background: #e4e4e4; border-radius: 0 0 6px 6px; }
.mini svg { width: 16px; height: 16px; }
.mini button { width: 18px; }
.swatch { width: 16px; height: 16px; border: 3px solid #a8431b; outline: 1px solid #cfa893; outline-offset: -1px; background: #f0e9e5; }

/* OCR dialog */
.dialog { position: absolute; left: 820px; top: 445px; width: 376px; background: #f1f1f1; border-radius: 10px; box-shadow: 0 0 1px 1px rgba(0, 0, 0, .22), 0 18px 36px 8px rgba(0, 0, 0, .38); }
.dialog header { display: grid; grid-template-columns: 1fr auto 1fr; align-items: center; height: 29px; padding: 0 8px; background: #fbfbfb; border-bottom: 1px solid #d9d9d9; border-radius: 10px 10px 0 0; }
.dialog h2 { font: 700 13px/17px Inter, sans-serif; color: #444; padding-bottom: 1px; }
.fields { display: grid; grid-template-columns: 115px auto; grid-auto-rows: 23px; gap: 4px 5px; align-items: center; padding-top: 41px; }
.fields label { text-align: right; grid-column: 1; white-space: nowrap; }
.pick { display: grid; align-items: center; height: 23px; border: 1px solid #c3c3c3; background: #fff; }
.pick select, .pick svg { grid-area: 1 / 1; }
.pick select { appearance: none; width: 100%; height: 21px; padding: 0 6px; border: 0; background: none; line-height: 17px; }
.pick svg { justify-self: end; width: 10px; height: 8px; margin-right: 6px; color: #777; pointer-events: none; }
.w200 { width: 200px; }
.w132 { width: 132px; }
.w72 { width: 72px; }
.pick.focus { border-color: #7aaedc; }
.dialog button, .fields input { height: 23px; border: 1px solid #c3c3c3; background: #fff; }
.dialog .dl { grid-column: 2; width: 88px; margin-left: 112px; }
.row { display: flex; align-items: center; gap: 7px; }
.fields input { width: 200px; padding: 0 6px; background: #f1f1f1; color: #999; }
.q { width: 15px; height: 15px; }
.checks { display: flex; flex-direction: column; gap: 8px; padding: 6px 0 0 123px; }
.checks label { display: flex; align-items: center; gap: 4px; }
.box { display: grid; }
.box input, .box svg { grid-area: 1 / 1; width: 14px; height: 14px; }
.box input { appearance: none; border: 1px solid #b5b5b5; background: #fff; }
.box input:checked { border-color: #3f97cf; }
.dialog footer { display: flex; justify-content: flex-end; gap: 4px; padding: 38px 32px 32px 0; }
.dialog footer button { width: 72px; }
.dialog footer .ok { border: 2px solid #3f97cf; }

/* Watermarks */
.marks { position: absolute; inset: 0; overflow: hidden; pointer-events: none; font: 56px/56px "Liberation Sans", sans-serif; color: rgba(255, 255, 255, .78); -webkit-text-stroke: 1px rgba(205, 205, 205, .7); text-shadow: 0 1px 2px rgba(0, 0, 0, .12); }
.marks span { position: absolute; transform: rotate(24deg); transform-origin: 0 51px; white-space: nowrap; }
.m1 { left: 808px; top: -48px; }
.m2 { left: 362px; top: 636px; }
.m3 { left: 1722px; top: 336px; }
```
